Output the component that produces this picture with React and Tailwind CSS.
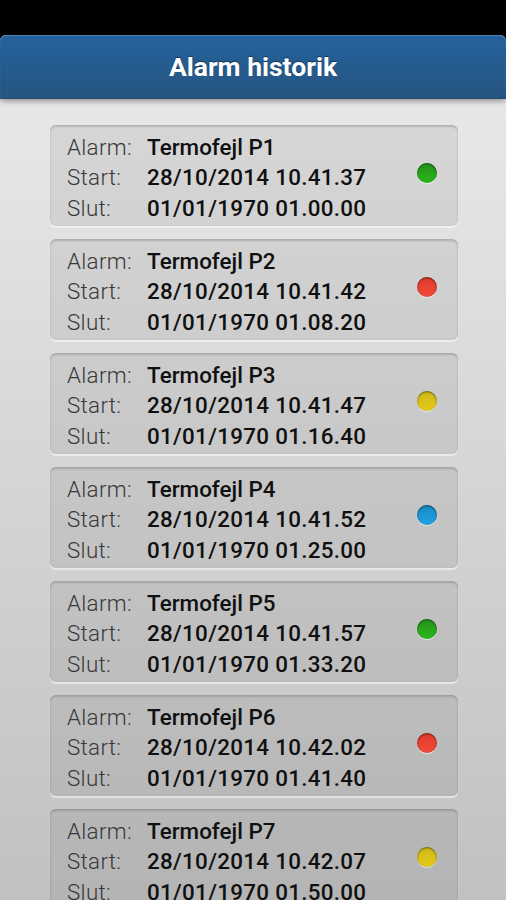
import React from 'react';
import clsx from 'clsx';

const LAMPS = {
    green: 'bg-linear-to-b from-[#239418] to-[#2bb51b]',
    red: 'bg-linear-to-b from-[#dc3b2b] to-[#f5493a]',
    yellow: 'bg-linear-to-b from-[#cdb81b] to-[#e4cb18]',
    blue: 'bg-linear-to-b from-[#1b89c6] to-[#21a2e4]'
};

const alarms = [
    { name: 'Termofejl P1', start: '28/10/2014 10.41.37', end: '01/01/1970 01.00.00', lamp: 'green' },
    { name: 'Termofejl P2', start: '28/10/2014 10.41.42', end: '01/01/1970 01.08.20', lamp: 'red' },
    { name: 'Termofejl P3', start: '28/10/2014 10.41.47', end: '01/01/1970 01.16.40', lamp: 'yellow' },
    { name: 'Termofejl P4', start: '28/10/2014 10.41.52', end: '01/01/1970 01.25.00', lamp: 'blue' },
    { name: 'Termofejl P5', start: '28/10/2014 10.41.57', end: '01/01/1970 01.33.20', lamp: 'green' },
    { name: 'Termofejl P6', start: '28/10/2014 10.42.02', end: '01/01/1970 01.41.40', lamp: 'red' },
    { name: 'Termofejl P7', start: '28/10/2014 10.42.07', end: '01/01/1970 01.50.00', lamp: 'yellow' }
];

const Row = ({ label, value, className }) => (
    <div className="flex h-[30.4px] items-center whitespace-nowrap">
        <span className="w-20 font-light tracking-[0.3px] text-[#383838]">{label}</span>
        <span className={clsx('font-medium text-[#101010]', className)}>{value}</span>
    </div>
);

const AlarmCard = ({ alarm }) => (
    <li className="flex h-[101px] shrink-0 justify-between rounded-[6px] bg-black/[0.065] pt-[6.6px] pr-[21px] pl-[17px] shadow-[inset_0_2px_2px_rgba(0,0,0,0.15),inset_0_0_2px_rgba(0,0,0,0.08),0_2px_1px_rgba(255,255,255,0.55)]">
        <div className="text-[22.4px] leading-[30px]">
            <Row label="Alarm:" value={alarm.name} className="tracking-[0.03px]" />
            <Row label="Start:" value={alarm.start} className="tracking-[0.3px]" />
            <Row label="Slut:" value={alarm.end} className="tracking-[0.3px]" />
        </div>
        <span
            className={clsx(
                'mt-[31px] size-5 rounded-full shadow-[inset_0_1px_2px_rgba(0,0,0,0.5),0_1px_1px_rgba(255,255,255,0.65)]',
                LAMPS[alarm.lamp]
            )}
        />
    </li>
);

const App = () => (
    <div className="flex h-[900px] w-[506px] flex-col overflow-hidden bg-black pt-[35px] font-['Roboto',sans-serif]">
        <div className="flex min-h-0 flex-1 flex-col rounded-t-[6px] bg-linear-to-b from-[#ebebeb] to-[#c1c1c1]">
            <header className="flex h-16 shrink-0 items-center justify-center rounded-t-[6px] border-b border-[#2b4d68] bg-linear-to-b from-[#24629e] to-[#265580] pt-px shadow-[inset_0_1px_1px_#5583b0,0_1px_7px_rgba(0,0,0,0.5)]">
                <h1 className="text-[26.5px] font-bold text-white [text-shadow:0_-1px_1px_rgba(0,0,0,0.4)]">Alarm historik</h1>
            </header>
            <ul className="mt-[26px] ml-[50px] flex min-h-0 w-[408px] flex-1 flex-col gap-[13px]">
                {alarms.map((alarm) => (
                    <AlarmCard key={alarm.name} alarm={alarm} />
                ))}
            </ul>
        </div>
    </div>
);

export default App;
